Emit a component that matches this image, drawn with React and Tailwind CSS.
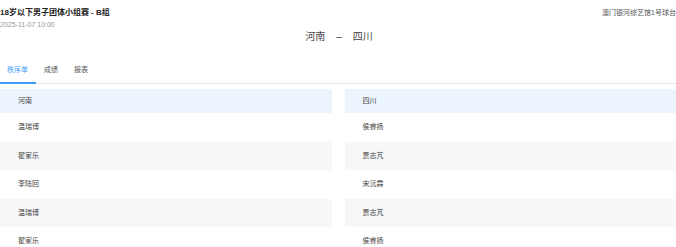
const left = ['温瑞博', '翟家乐', '李陆回', '温瑞博', '翟家乐']
const right = ['侯睿扬', '贾志芃', '宋沅霖', '贾志芃', '侯睿扬']

export default function App() {
  return (
    <div
      className="h-[247px] w-[676px] overflow-hidden bg-white text-[#333]"
      style={{ fontFamily: '"Liberation Sans", "Noto Sans CJK SC", sans-serif' }}
    >
      <div className="flex items-start justify-between pt-[7px]">
        <div>
          <p className="text-[8px] font-bold leading-[11px] text-[#222]">18岁以下男子团体小组赛 - B组</p>
          <p className="mt-[2px] text-[7px] leading-[9px] text-[#999]">2025-11-07 10:00</p>
        </div>
        <p className="whitespace-nowrap text-[7px] leading-[11px] text-[#555]">澳门银河综艺馆1号球台</p>
      </div>

      <div className="mt-[1px] flex justify-center gap-[11px] pl-[2px] text-[10px] leading-[14px] text-[#444]">
        <span>河南</span>
        <span>–</span>
        <span>四川</span>
      </div>

      <div className="mt-[20px] flex border-b border-[#e4e7ed] text-[7px] leading-[12px]">
        <div className="-mb-px border-b-2 border-[#409eff] pl-[7px] pr-[8px] pb-[6px] text-[#409eff]">秩序单</div>
        <div className="px-[8px] pb-[6px] text-[#555]">成绩</div>
        <div className="px-[8px] pb-[6px] text-[#555]">报表</div>
      </div>

      <div className="mt-[5px] grid grid-cols-2 gap-[13px] text-[7px] text-[#444]">
        {[['河南', left], ['四川', right]].map(([team, names]) => (
          <div key={team}>
            <div className="flex h-[24px] items-center bg-[#ecf4fe] pl-[18px]">{team}</div>
            {names.map((n, i) => (
              <div
                key={i}
                className={`flex h-[28.6px] items-center pl-[18px] ${i % 2 === 1 ? 'bg-[#f6f7f9]' : ''}`}
              >
                {n}
              </div>
            ))}
          </div>
        ))}
      </div>
    </div>
  )
}
